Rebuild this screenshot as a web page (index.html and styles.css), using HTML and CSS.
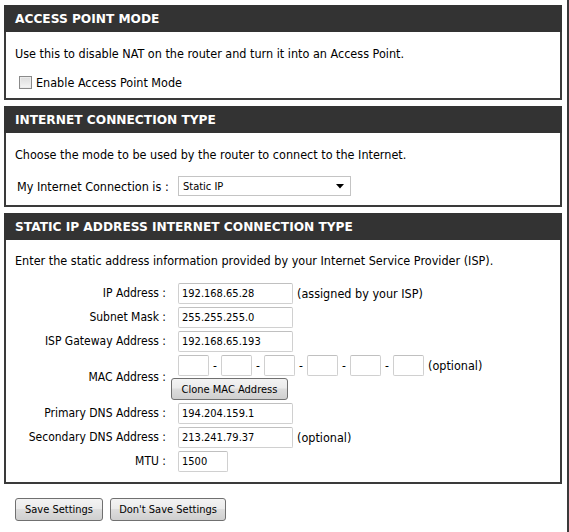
FILE: index.html
```html
<!DOCTYPE html>
<html>
<head>
<meta charset="utf-8">
<link rel="stylesheet" href="styles.css">
</head>
<body>
<div class="page">
  <section class="box">
    <h2 class="box-title">ACCESS POINT MODE</h2>
    <div class="box-body">
      <p class="intro">Use this to disable NAT on the router and turn it into an Access Point.</p>
      <label class="check-row"><span class="checkbox"></span>Enable Access Point Mode</label>
    </div>
  </section>

  <section class="box">
    <h2 class="box-title">INTERNET CONNECTION TYPE</h2>
    <div class="box-body body-2">
      <p class="intro">Choose the mode to be used by the router to connect to the Internet.</p>
      <div class="conn-row">
        <span class="conn-label">My Internet Connection is :</span>
        <span class="select-wrap">
          <select class="select"><option>Static IP</option></select>
          <svg class="select-arrow" width="8" height="5" viewBox="0 0 8 5"><path d="M0 0H8L4 4.5Z" fill="#000"/></svg>
        </span>
      </div>
    </div>
  </section>

  <section class="box">
    <h2 class="box-title">STATIC IP ADDRESS INTERNET CONNECTION TYPE</h2>
    <div class="box-body body-3">
      <p class="intro">Enter the static address information provided by your Internet Service Provider (ISP).</p>
      <div class="form">
        <span class="lbl">IP Address :</span>
        <span class="ctl"><input class="field" value="192.168.65.28"><span class="note">(assigned by your ISP)</span></span>

        <span class="lbl">Subnet Mask :</span>
        <span class="ctl"><input class="field" value="255.255.255.0"></span>

        <span class="lbl">ISP Gateway Address :</span>
        <span class="ctl"><input class="field" value="192.168.65.193"></span>

        <span class="lbl lbl-mac">MAC Address :</span>
        <span class="ctl ctl-mac">
          <span class="mac-line">
            <input class="field mac"><span class="dash">-</span>
            <input class="field mac mac-n"><span class="dash">-</span>
            <input class="field mac mac-n"><span class="dash">-</span>
            <input class="field mac mac-n"><span class="dash">-</span>
            <input class="field mac mac-n"><span class="dash">-</span>
            <input class="field mac mac-n"><span class="note">(optional)</span>
          </span>
          <button class="btn btn-clone" type="button">Clone MAC Address</button>
        </span>

        <span class="lbl">Primary DNS Address :</span>
        <span class="ctl"><input class="field" value="194.204.159.1"></span>

        <span class="lbl">Secondary DNS Address :</span>
        <span class="ctl"><input class="field" value="213.241.79.37"><span class="note">(optional)</span></span>

        <span class="lbl">MTU :</span>
        <span class="ctl"><input class="field mtu" value="1500"></span>
      </div>
    </div>
  </section>

  <div class="actions">
    <button class="btn btn-save" type="button">Save Settings</button>
    <button class="btn btn-nosave" type="button">Don't Save Settings</button>
  </div>
</div>
</body>
</html>
```

FILE: styles.css
```css
html, body {
  margin: 0;
  padding: 0;
  background: #fff;
}

.page {
  width: 569px;
  height: 532px;
  box-sizing: border-box;
  border-right: 2px solid #3a3a3a;
  padding: 5px 0 0 4px;
  font-family: "DejaVu Sans Condensed", "DejaVu Sans", sans-serif;
  font-stretch: condensed;
  font-size: 12.5px;
  color: #000;
}

.box {
  width: 558px;
  box-sizing: border-box;
  margin-bottom: 6px;
}

.box-title {
  margin: 0;
  height: 27px;
  background: #333333;
  color: #fff;
  font-family: "DejaVu Sans", sans-serif;
  font-stretch: normal;
  font-size: 12.2px;
  font-weight: bold;
  line-height: 28px;
  padding-left: 11px;
}

.box-body {
  border: 2px solid #3a3a3a;
  border-top: none;
  padding: 14px 10px 8px 9px;
}

.body-2 { padding-bottom: 9px; }
.body-3 { padding-top: 13px; padding-bottom: 10px; }

.intro {
  margin: 0;
  line-height: 16px;
}

.check-row {
  display: flex;
  align-items: center;
  margin-top: 12px;
  margin-left: 4px;
  height: 16px;
}

.checkbox {
  width: 11px;
  height: 11px;
  border: 1px solid #8a8a8a;
  background: linear-gradient(#dcdcdc, #f6f6f6);
  box-shadow: inset 0 0 0 1px #ececec;
  margin-right: 4px;
}

.conn-row {
  display: flex;
  align-items: center;
  margin-top: 13px;
  margin-left: 2px;
}

.conn-label {
  flex: 0 0 161px;
  white-space: nowrap;
}

.select-wrap {
  position: relative;
  display: inline-block;
}

.select {
  appearance: none;
  -webkit-appearance: none;
  width: 173px;
  height: 20px;
  border: 1px solid #c4c4c4;
  border-radius: 0;
  background: #fff;
  font-family: "DejaVu Sans Condensed", "DejaVu Sans", sans-serif;
  font-stretch: condensed;
  font-size: 11px;
  padding: 0 0 0 4px;
  color: #000;
  display: block;
}

.select-arrow {
  position: absolute;
  right: 7px;
  top: 8px;
}

.form {
  display: grid;
  grid-template-columns: 150px 1fr;
  column-gap: 5px;
  row-gap: 3px;
  margin-top: 14px;
  margin-left: 1px;
}

.lbl {
  text-align: right;
  height: 21px;
  line-height: 21px;
  white-space: nowrap;
  font-size: 12px;
}

.lbl-mac {
  height: auto;
  align-self: center;
}

.ctl {
  display: flex;
  align-items: center;
  height: 21px;
}

.ctl-mac {
  height: auto;
  flex-direction: column;
  align-items: flex-start;
  gap: 2px;
}

.mac-line {
  display: flex;
  align-items: center;
  height: 21px;
}

.field {
  box-sizing: border-box;
  width: 115px;
  height: 21px;
  margin: 0 0 0 7px;
  border: 1px solid #d0d0d0;
  border-top-color: #c0c0c0;
  border-radius: 2px;
  padding: 0 3px;
  font-family: "DejaVu Sans Condensed", "DejaVu Sans", sans-serif;
  font-stretch: condensed;
  font-size: 11px;
  color: #000;
  background: #fff;
  outline: none;
}

.mac { width: 31px; }
.mac-n { margin-left: 4px; }
.mtu { width: 50px; }

.dash {
  display: inline-block;
  width: 4px;
  margin-left: 4px;
  text-align: center;
  font-size: 12px;
}

.note {
  margin-left: 4px;
  white-space: nowrap;
}

.btn {
  box-sizing: border-box;
  height: 22px;
  border: 1px solid #707070;
  border-radius: 3px;
  background: linear-gradient(#f3f3f3 0%, #ebebeb 45%, #dddddd 50%, #cfcfcf 100%);
  font-family: "DejaVu Sans Condensed", "DejaVu Sans", sans-serif;
  font-stretch: condensed;
  font-size: 11px;
  color: #000;
  padding: 0;
  cursor: default;
}

.btn-clone { width: 117px; }

.actions {
  display: flex;
  gap: 7px;
  margin-top: 14px;
  margin-left: 11px;
}

.btn-save { width: 88px; height: 23px; }
.btn-nosave { width: 116px; height: 23px; }
```
